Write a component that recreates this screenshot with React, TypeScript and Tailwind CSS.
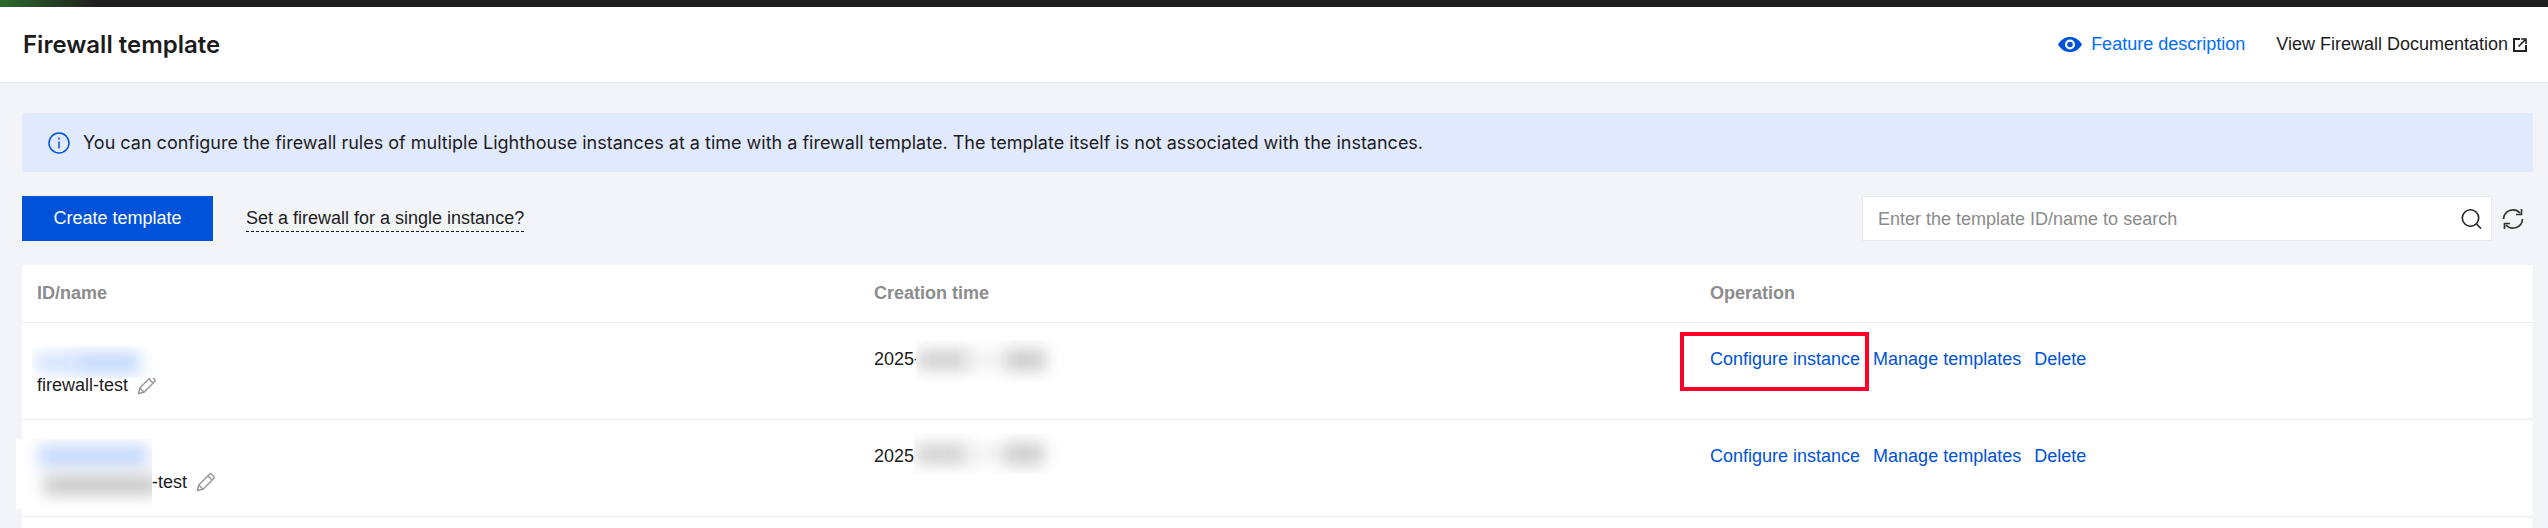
const sans = "font-['Liberation_Sans',Arial,sans-serif]";
const inter = "font-['Inter','Liberation_Sans',sans-serif]";

function PencilIcon() {
  return (
    <svg viewBox="0 0 20 20" fill="none" stroke="#999" strokeWidth="1.5" strokeLinejoin="round" className="h-5 w-5 shrink-0">
      <path d="M1.500 18.500L2.800 13L13.500 2.300Q14.500 1.300 15.500 2.300L17.700 4.500Q18.700 5.500 17.700 6.500L7 17.200Z" />
      <path d="M12 4L16 8M2.800 13L7 17.200" />
    </svg>
  );
}

function Operations({ boxed }: { boxed?: boolean }) {
  return (
    <div className="relative flex items-center gap-[13px] text-[#0052d9]">
      <a>Configure instance</a>
      <a>Manage templates</a>
      <a>Delete</a>
      {boxed && <div className="absolute left-[-30px] top-[-15px] h-[59px] w-[189px] border-4 border-[#ff0029]" />}
    </div>
  );
}

function Row({ second }: { second?: boolean }) {
  return (
    <div className="grid h-[97px] grid-cols-3 border-b border-[#e7eaef]">
      <div className="relative px-[15px] pt-[50px]">
        <div className="flex items-center gap-[9px] leading-6">
          <span>{second ? <span className="pl-[115px]">-test</span> : "firewall-test"}</span>
          <PencilIcon />
        </div>
        {second ? (
          <div className="absolute left-[-6px] top-[19px] h-[70px] w-[136px] overflow-hidden bg-white">
            <div className="absolute left-[22px] top-[6px] h-[22px] w-[110px] bg-[#c4d9fb] blur-[8px]" />
            <div className="absolute left-[28px] top-[36px] h-[20px] w-[114px] bg-[#c8c8c8] blur-[8px]" />
          </div>
        ) : (
          <div className="absolute left-[10px] top-[23px] h-[32px] w-[145px] overflow-hidden bg-white">
            <div className="absolute left-[4px] top-[7px] h-[20px] w-[44px] bg-[#d4e2fc] blur-[8px]" />
            <div className="absolute left-[44px] top-[6px] h-[22px] w-[64px] bg-[#c4d9fb] blur-[8px]" />
          </div>
        )}
      </div>
      <div className="relative px-[15px] pt-[24px] leading-6">
        <span>2025-</span>
        <div className={second ? "absolute left-[55px] top-[14px] h-[40px] w-[150px] overflow-hidden bg-white" : "absolute left-[57px] top-[17px] h-[42px] w-[150px] overflow-hidden bg-white"}>
          <div className="absolute left-[2px] top-[10px] h-5 w-[52px] bg-[#d0d0d0] blur-[8px]" />
          <div className="absolute left-[50px] top-[13px] h-[14px] w-[44px] bg-[#eeeeee] blur-[8px]" />
          <div className="absolute left-[90px] top-[9px] h-[22px] w-[40px] bg-[#cccccc] blur-[8px]" />
        </div>
      </div>
      <div className="pl-[14px] pt-[24px] leading-6">
        <Operations boxed={!second} />
      </div>
    </div>
  );
}

export default function App() {
  return (
    <div className={`${sans} h-[528px] w-[2548px] overflow-hidden bg-[#f2f4f8] text-[18px] text-[#1c1c1c]`}>
      <div className="h-[7px] bg-[linear-gradient(90deg,#2c6b2a_0,#1f1f1f_95px)]" />
      <header className="flex h-[76px] items-center justify-between border-b border-[#e7eaef] bg-white pl-[23px] pr-[21px]">
        <h1 className={`${inter} text-[24px] font-semibold`}>Firewall template</h1>
        <div className="flex items-center gap-[31px]">
          <a className="flex items-center gap-[9px] text-[#006eff]">
            <svg viewBox="0 0 24 15" className="h-[15px] w-6">
              <path fill="#0052d9" d="M0 7.500C3 2.500 7 0 12 0s9 2.500 12 7.500C21 12.500 17 15 12 15S3 12.500 0 7.500Z" />
              <circle cx="12" cy="7.500" r="5" fill="#fff" />
              <circle cx="12" cy="7.500" r="2.800" fill="#0052d9" />
            </svg>
            Feature description
          </a>
          <a className="flex items-center gap-[5px]">
            View Firewall Documentation
            <svg viewBox="0 0 14 14" fill="none" stroke="#222" strokeWidth="2" className="h-[14px] w-[14px]">
              <path d="M7 1H1V13H13V7" />
              <path d="M5.500 8.500L12 2M8 1H13V6" strokeWidth="1.600" />
            </svg>
          </a>
        </div>
      </header>

      <main className="pl-[22px] pr-[15px]">
        <div className="mt-[30px] flex h-[59px] items-center gap-[13px] bg-[#e1eafd] pl-[26px]">
          <svg viewBox="0 0 22 22" fill="none" stroke="#0052d9" strokeWidth="1.500" className="h-[22px] w-[22px] shrink-0">
            <circle cx="11" cy="11" r="10" />
            <path d="M11 9.500V16.500" />
            <path d="M11 5.500V7.500" />
          </svg>
          <span className={inter}>You can configure the firewall rules of multiple Lighthouse instances at a time with a firewall template. The template itself is not associated with the instances.</span>
        </div>

        <div className="mt-[24px] flex h-[45px] items-center">
          <button className="h-[45px] w-[191px] bg-[#0052d9] text-white">Create template</button>
          <a className="ml-[33px] border-b border-dashed border-[#1c1c1c] leading-[26px]">Set a firewall for a single instance?</a>
          <div className="ml-auto flex h-[45px] w-[630px] items-center justify-between border border-[#e7eaef] bg-white pl-[15px] pr-[9px]">
            <span className="translate-y-px text-[#8a8a8a]">Enter the template ID/name to search</span>
            <svg viewBox="0 0 21 20" fill="none" stroke="#222" strokeWidth="1.600" className="h-5 w-[21px]">
              <circle cx="9.500" cy="9" r="8.200" />
              <path d="M15.500 15L20 19.500" />
            </svg>
          </div>
          <div className="flex w-[41px] justify-end pr-[9px]">
            <svg viewBox="0 0 22 22" fill="none" stroke="#333" strokeWidth="1.700" className="h-[22px] w-[22px]">
              <path d="M1.500 11A9.500 9.500 0 0 1 18 5" />
              <path d="M19.500 1V6.500H14" />
              <path d="M20.500 11A9.500 9.500 0 0 1 4 17" />
              <path d="M2.500 21V15.500H8" />
            </svg>
          </div>
        </div>

        <div className="mt-[24px] bg-white">
          <div className="grid h-[58px] grid-cols-3 items-center border-b border-[#e7eaef] font-bold text-[#8c8c8c]">
            <div className="px-[15px]">ID/name</div>
            <div className="px-[15px]">Creation time</div>
            <div className="pl-[14px]">Operation</div>
          </div>
          <Row />
          <Row second />
          <div className="h-4" />
        </div>
      </main>
    </div>
  );
}
